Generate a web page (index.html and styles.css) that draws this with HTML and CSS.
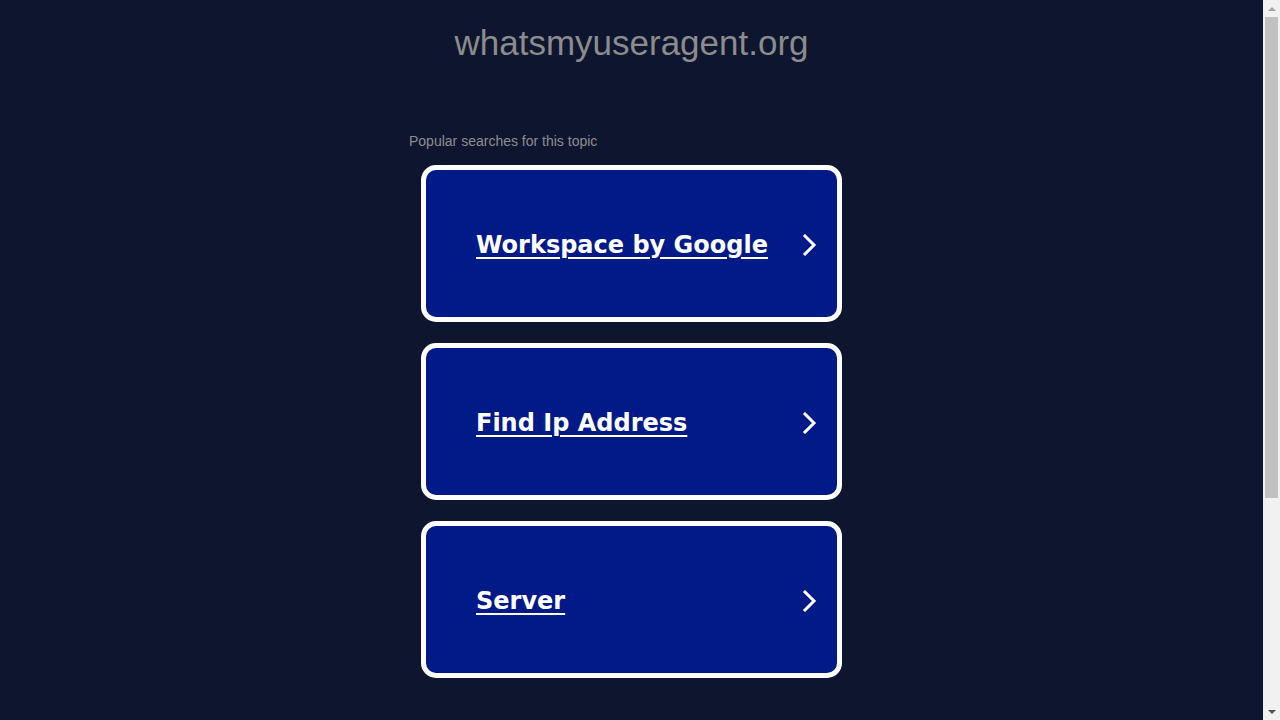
FILE: index.html
```html
<!DOCTYPE html>
<html lang="en">
<head>
<meta charset="utf-8">
<title>whatsmyuseragent.org</title>
<link rel="stylesheet" href="styles.css">
</head>
<body>
<div class="page">
  <header class="site-header">
    <h1 class="domain">whatsmyuseragent.org</h1>
  </header>
  <main class="searches">
    <p class="searches-title">Popular searches for this topic</p>
    <ul class="search-list">
      <li class="search-card">
        <a class="search-link" href="#">Workspace by Google</a>
        <svg class="chevron" viewBox="0 0 16 22" width="16" height="22"><path d="M3 2 L12 11 L3 20" fill="none" stroke="#fff" stroke-width="3" stroke-linecap="square"/></svg>
      </li>
      <li class="search-card">
        <a class="search-link" href="#">Find Ip Address</a>
        <svg class="chevron" viewBox="0 0 16 22" width="16" height="22"><path d="M3 2 L12 11 L3 20" fill="none" stroke="#fff" stroke-width="3" stroke-linecap="square"/></svg>
      </li>
      <li class="search-card">
        <a class="search-link" href="#">Server</a>
        <svg class="chevron" viewBox="0 0 16 22" width="16" height="22"><path d="M3 2 L12 11 L3 20" fill="none" stroke="#fff" stroke-width="3" stroke-linecap="square"/></svg>
      </li>
    </ul>
  </main>
</div>
<div class="scrollbar" aria-hidden="true">
  <div class="sb-button"><svg viewBox="0 0 8 4" width="8" height="4"><path d="M0 4 L4 0 L8 4 Z" fill="#a3a3a3"/></svg></div>
  <div class="sb-track"><div class="sb-thumb"></div></div>
  <div class="sb-button"><svg viewBox="0 0 8 4" width="8" height="4"><path d="M0 0 L8 0 L4 4 Z" fill="#505050"/></svg></div>
</div>
</body>
</html>
```

FILE: styles.css
```css
html, body {
  margin: 0;
  padding: 0;
  background: #0e152e;
}

.page {
  min-height: 1027px;
  margin-right: 17px;
  display: flex;
  flex-direction: column;
  align-items: center;
}

.site-header {
  padding-top: 23px;
}

.domain {
  margin: 0;
  font-family: "Liberation Sans", Arial, sans-serif;
  font-weight: normal;
  font-size: 35px;
  color: #8c8c8c;
  text-align: center;
}

.searches {
  width: 445px;
  margin-top: 70px;
}

.searches-title {
  margin: 0 0 16px 0;
  font-family: "Liberation Sans", Arial, sans-serif;
  font-size: 14px;
  color: #8e8e8e;
}

.search-list {
  list-style: none;
  margin: 0;
  padding: 0 12px;
  display: flex;
  flex-direction: column;
  gap: 21px;
}

.search-card {
  box-sizing: border-box;
  height: 157px;
  border: 5px solid #ffffff;
  border-radius: 15px;
  background: #021a87;
  display: flex;
  align-items: center;
  justify-content: space-between;
  padding: 2px 19px 0 50px;
}

.search-link {
  font-family: "DejaVu Sans", Verdana, sans-serif;
  font-weight: bold;
  font-size: 24px;
  color: #ffffff;
  text-decoration: underline;
  text-underline-offset: 4px;
  text-decoration-thickness: 2px;
}

.chevron {
  display: block;
  flex: none;
}

/* imitation of the browser's classic vertical scrollbar */
.scrollbar {
  position: fixed;
  top: 0;
  right: 0;
  width: 17px;
  height: 100vh;
  background: #f1f1f1;
  display: flex;
  flex-direction: column;
}

.sb-button {
  height: 17px;
  flex: none;
  display: flex;
  align-items: center;
  justify-content: center;
}

.sb-button svg {
  display: block;
}

.sb-track {
  flex: 1;
  padding: 0 2px;
}

.sb-thumb {
  height: 481px;
  background: #c1c1c1;
}
```
